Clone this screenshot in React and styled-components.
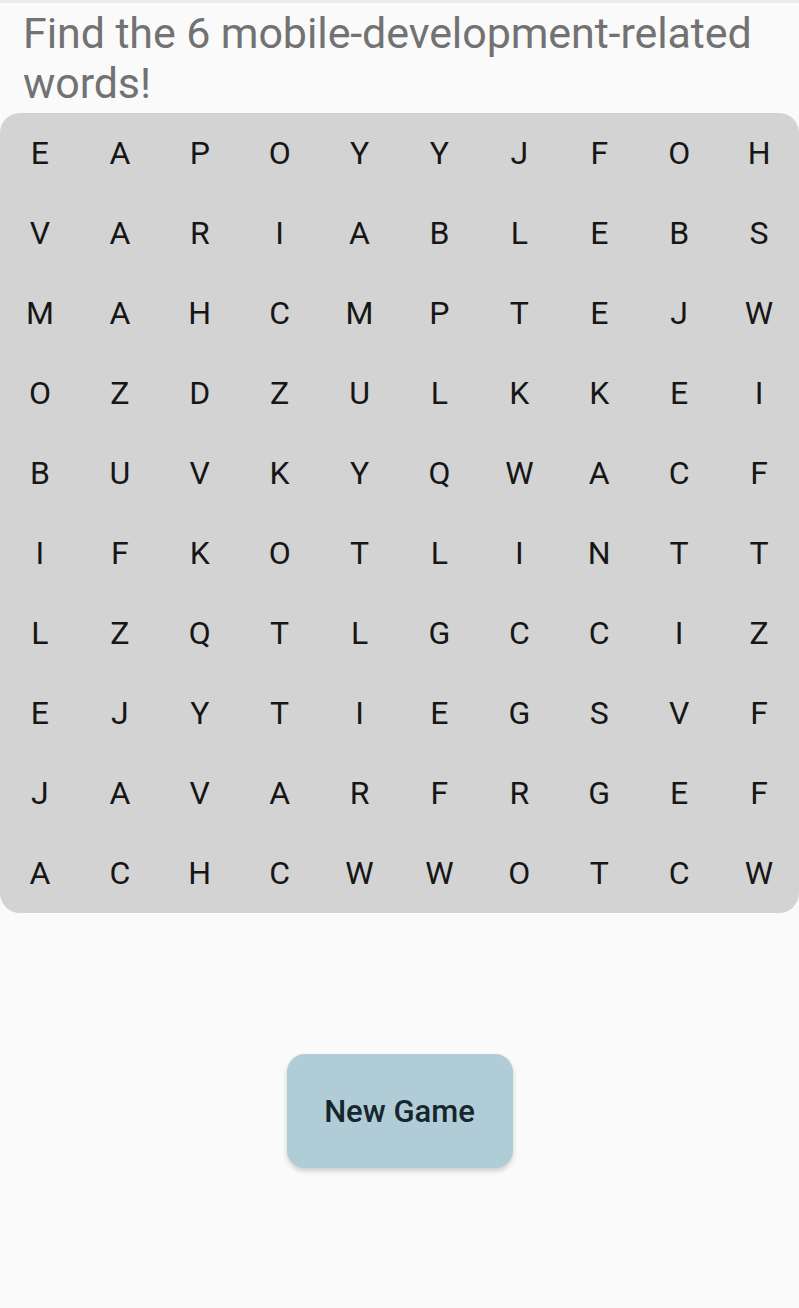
import React from 'react';
import styled, { createGlobalStyle } from 'styled-components';

const GlobalStyle = createGlobalStyle`
  html, body {
    margin: 0;
    padding: 0;
    background: #fafafa;
  }
  body {
    font-family: Roboto, "Liberation Sans", sans-serif;
  }
`;

const GRID = [
  'EAPOYYJFOH',
  'VARIABLEBS',
  'MAHCMPTEJW',
  'OZDZULKKEI',
  'BUVKYQWACF',
  'IFKOTLINTT',
  'LZQTLGCCIZ',
  'EJYTIEGSVF',
  'JAVARFRGEF',
  'ACHCWWOTCW',
];

const Page = styled.div`
  width: 799px;
  min-height: 1308px;
  display: flex;
  flex-direction: column;
  border-top: 3px solid #ececef;
  box-sizing: border-box;
`;

const Title = styled.h1`
  margin: 0;
  padding: 5px 23px 5px;
  font-size: 43px;
  line-height: 50px;
  font-weight: 400;
  color: #727272;
  letter-spacing: -0.1px;
`;

const Board = styled.div`
  display: grid;
  grid-template-columns: repeat(10, 1fr);
  grid-auto-rows: 80px;
  background: #d3d3d3;
  border-radius: 20px;
`;

const Cell = styled.div`
  display: flex;
  align-items: center;
  justify-content: center;
  font-size: 32px;
  color: #161616;
`;

const Actions = styled.div`
  display: flex;
  justify-content: center;
  padding-top: 141px;
`;

const Button = styled.button`
  width: 226px;
  height: 114px;
  border: none;
  border-radius: 18px;
  background: #b0cdd7;
  color: #17262c;
  font-family: Roboto, "Liberation Sans", sans-serif;
  font-size: 31px;
  font-weight: 500;
  box-shadow: 0 3px 5px rgba(0, 0, 0, 0.18);
  cursor: pointer;
`;

const App = () => (
  <Page>
    <GlobalStyle />
    <Title>Find the 6 mobile-development-related words!</Title>
    <Board>
      {GRID.map((row, r) =>
        row.split('').map((ch, c) => <Cell key={`${r}-${c}`}>{ch}</Cell>)
      )}
    </Board>
    <Actions>
      <Button>New Game</Button>
    </Actions>
  </Page>
);

export default App;
